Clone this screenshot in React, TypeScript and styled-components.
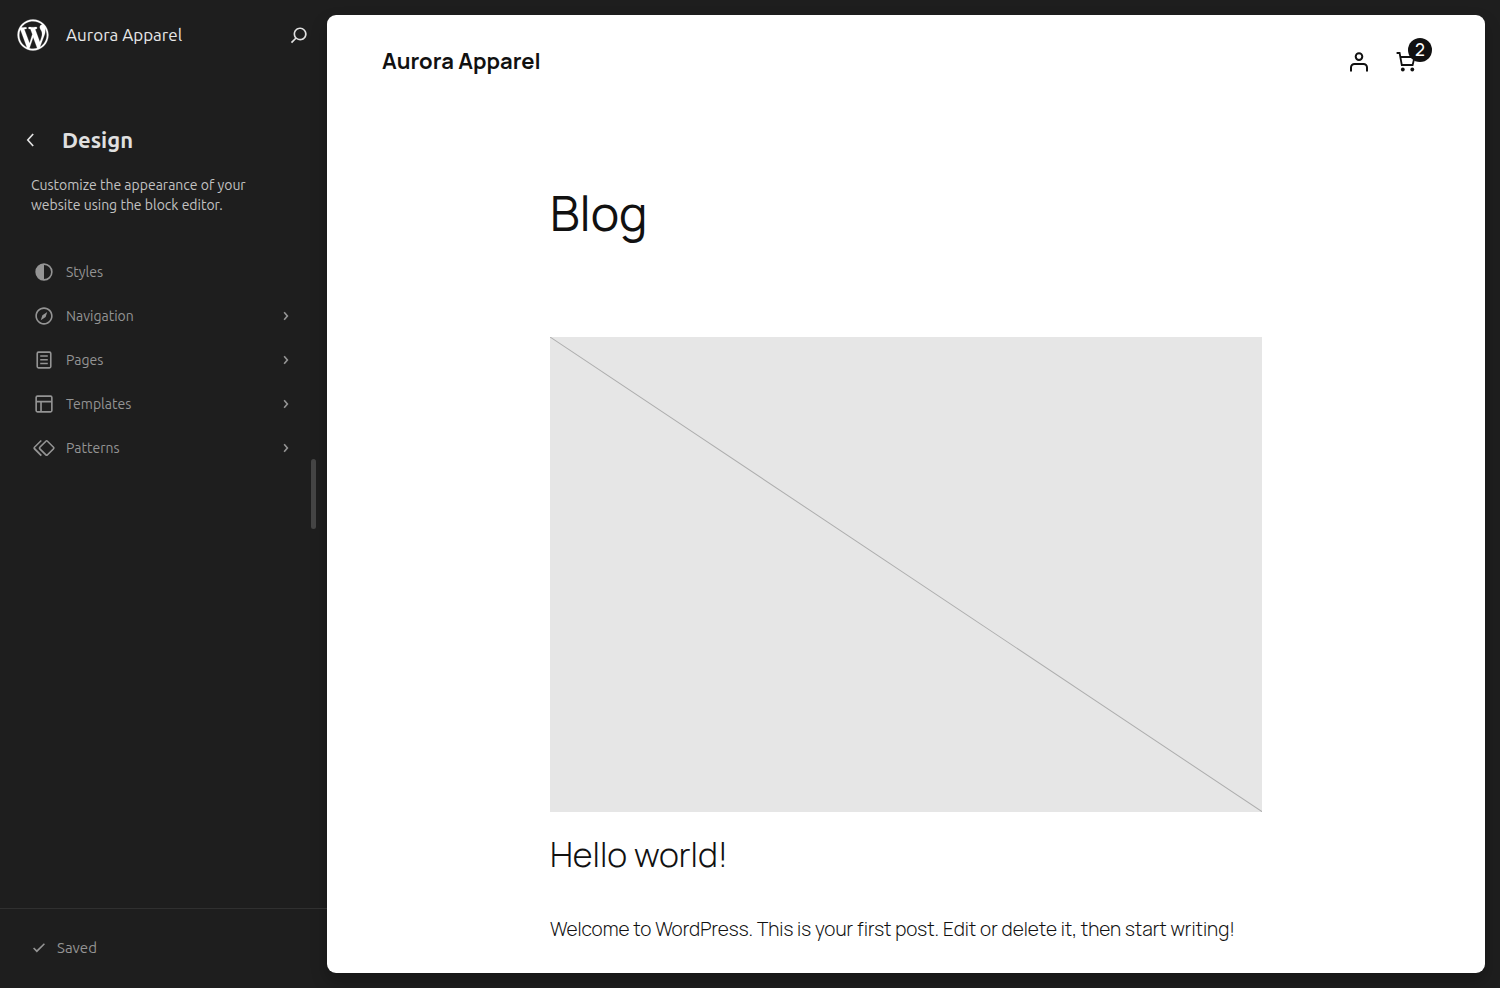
import React from "react";
import styled, { createGlobalStyle } from "styled-components";

const uiFont = `"Ubuntu", "Noto Sans", "Open Sans", sans-serif`;
const siteFont = `"Manrope", Inter, "Liberation Sans", sans-serif`;

const GlobalStyle = createGlobalStyle`
  *, *::before, *::after { box-sizing: border-box; }
  body { margin: 0; background: #1e1e1e; }
  h1, h2, p, ul { margin: 0; padding: 0; }
  button { font: inherit; border: 0; padding: 0; background: none; cursor: pointer; }
  a { text-decoration: none; color: inherit; }
`;

const Shell = styled.div`
  display: flex;
  min-height: 100vh;
  background: #1e1e1e;
`;

const Sidebar = styled.aside`
  position: relative;
  display: flex;
  flex-direction: column;
  flex: 0 0 327px;
  font-family: ${uiFont};
  color: #e0e0e0;
`;

const Hub = styled.header`
  display: flex;
  align-items: center;
  height: 70px;
  padding: 0 15px 0 16px;
  gap: 16px;
`;

const HubTitle = styled.a`
  flex: 1;
  font-size: 17px;
  line-height: 24px;
  color: #e8e8e8;
`;

const IconButton = styled.button`
  display: flex;
  align-items: center;
  justify-content: center;
  color: #e0e0e0;
`;

const LogoButton = styled(IconButton)`
  color: #fff;
`;

const Icon = styled.svg<{ $size?: number }>`
  display: block;
  flex: none;
  width: ${(p) => p.$size ?? 24}px;
  height: ${(p) => p.$size ?? 24}px;
  fill: currentColor;
`;

const Heading = styled.div`
  display: flex;
  align-items: center;
  gap: 18px;
  margin-top: 54px;
  padding: 0 18px;
`;

const PanelTitle = styled.h1`
  font-size: 22px;
  line-height: 32px;
  font-weight: 600;
`;

const Description = styled.p`
  margin-top: 19px;
  padding: 0 60px 0 31px;
  font-size: 14px;
  line-height: 20px;
  color: #c2c2c2;
`;

const NavList = styled.ul`
  margin-top: 35px;
  padding: 0 28px 0 31px;
  list-style: none;
`;

const NavLink = styled.a`
  display: flex;
  align-items: center;
  gap: 9px;
  height: 44px;
  font-size: 14px;
  line-height: 20px;
  color: #949494;
`;

const NavLabel = styled.span`
  flex: 1;
`;

const ResizeHandle = styled.button`
  position: absolute;
  top: 50%;
  right: 11px;
  width: 5px;
  height: 70px;
  margin-top: -35px;
  border-radius: 3px;
  background: #444;
`;

const SaveBar = styled.footer`
  display: flex;
  align-items: center;
  height: 80px;
  margin-top: auto;
  padding: 0 26px 2px;
  border-top: 1px solid #303030;
`;

const SavedButton = styled.button`
  display: flex;
  align-items: center;
  gap: 5px;
  font-size: 15px;
  line-height: 20px;
  color: #949494;
`;

const Canvas = styled.main`
  flex: 1;
  min-width: 0;
  margin: 15px 15px 15px 0;
  border-radius: 9px;
  background: #fff;
  box-shadow: 0 8px 16px rgba(0, 0, 0, 0.25);
  font-family: ${siteFont};
  color: #111;
`;

const SiteHeader = styled.div`
  display: flex;
  align-items: center;
  justify-content: space-between;
  height: 92px;
  padding: 0 66px 0 55px;
`;

const SiteTitle = styled.a`
  font-size: 22px;
  line-height: 32px;
  font-weight: 700;
`;

const SiteActions = styled.div`
  display: flex;
  align-items: center;
  gap: 24px;
`;

const SiteAction = styled.button`
  position: relative;
  display: block;
  color: #111;
`;

const Badge = styled.span`
  position: absolute;
  top: -11px;
  right: -13px;
  width: 24px;
  height: 24px;
  border-radius: 50%;
  background: #111;
  color: #fff;
  font-size: 17px;
  font-weight: 500;
  line-height: 24px;
  text-align: center;
`;

const Article = styled.article`
  max-width: 712px;
  margin: 0 auto;
  padding: 72px 0 28px;
`;

const PageTitle = styled.h1`
  font-size: 48px;
  line-height: 68px;
  font-weight: 400;
`;

const FeaturedImage = styled.svg`
  display: block;
  width: 100%;
  aspect-ratio: 3 / 2;
  margin-top: 90px;
  background: #e6e6e6;
`;

const PostTitle = styled.h2`
  margin-top: 19px;
  font-size: 34px;
  line-height: 46px;
  font-weight: 300;
`;

const PostText = styled.p`
  margin-top: 36px;
  font-size: 19px;
  line-height: 32px;
  font-weight: 300;
`;

const paths = {
  search:
    "M13 5c-3.3 0-6 2.7-6 6 0 1.4.5 2.7 1.3 3.7l-3.8 3.8 1.1 1.1 3.8-3.8c1 .8 2.3 1.3 3.7 1.3 3.3 0 6-2.7 6-6S16.3 5 13 5zm0 10.5c-2.5 0-4.5-2-4.5-4.5s2-4.5 4.5-4.5 4.5 2 4.5 4.5-2 4.5-4.5 4.5z",
  back: "M14.6 7l-1.2-1L8 12l5.4 6 1.2-1-4.6-5z",
  forward:
    "M10.86 8.04L14.28 12.03L10.86 16.02L9.72 15.04L12.3 12.03L9.72 9.02Z",
  styles:
    "M20 12a8 8 0 1 1-16 0 8 8 0 0 1 16 0Zm-1.5 0a6.5 6.5 0 0 1-6.5 6.5v-13a6.5 6.5 0 0 1 6.5 6.5Z",
  navigation:
    "M12 4c-4.4 0-8 3.6-8 8s3.6 8 8 8 8-3.6 8-8-3.6-8-8-8zm0 14.5c-3.6 0-6.5-2.9-6.5-6.5S8.4 5.5 12 5.5s6.5 2.9 6.5 6.5-2.9 6.5-6.5 6.5zM9 16l4.5-3L15 8.4l-4.5 3L9 16z",
  pages:
    "M15.5 7.5h-7V9h7V7.5Zm-7 3.5h7v1.5h-7V11Zm7 3.5h-7V16h7v-1.5ZM17 4H7a2 2 0 0 0-2 2v12a2 2 0 0 0 2 2h10a2 2 0 0 0 2-2V6a2 2 0 0 0-2-2ZM7 5.5h10a.5.5 0 0 1 .5.5v12a.5.5 0 0 1-.5.5H7a.5.5 0 0 1-.5-.5V6a.5.5 0 0 1 .5-.5Z",
  templates:
    "M18 5.5H6a.5.5 0 00-.5.5v3h13V6a.5.5 0 00-.5-.5zm.5 5H10v8h8a.5.5 0 00.5-.5v-7.5zm-10 0h-3V18a.5.5 0 00.5.5h2.5v-8zM6 4h12a2 2 0 012 2v12a2 2 0 01-2 2H6a2 2 0 01-2-2V6a2 2 0 012-2z",
  patterns:
    "M21.3 10.8l-5.6-5.6c-.7-.7-1.8-.7-2.5 0l-5.6 5.6c-.7.7-.7 1.8 0 2.5l5.6 5.6c.3.3.8.5 1.2.5s.9-.2 1.2-.5l5.6-5.6c.8-.7.8-1.9.1-2.5zm-1 1.4l-5.6 5.6c-.1.1-.3.1-.4 0l-5.6-5.6c-.1-.1-.1-.3 0-.4l5.6-5.6s.1-.1.2-.1.1 0 .2.1l5.6 5.6c.1.1.1.3 0 .4zm-16.6-.4L10 5.5l-1-1-6.3 6.3c-.7.7-.7 1.8 0 2.5L9 19.5l1.1-1.1-6.3-6.3c-.2 0-.2-.2-.1-.3z",
  check: "M16.5 7.5 10 13.9l-2.5-2.4-1 1 3.5 3.6 7.5-7.6z",
  wordpress:
    "M20 10c0-5.51-4.49-10-10-10C4.48 0 0 4.49 0 10c0 5.52 4.48 10 10 10 5.51 0 10-4.48 10-10zM7.78 15.37L4.37 6.22c.55-.02 1.17-.08 1.17-.08.5-.06.44-1.13-.06-1.11 0 0-1.45.11-2.37.11-.18 0-.37 0-.58-.01C4.12 2.69 6.87 1.11 10 1.11c2.33 0 4.45.87 6.05 2.34-.68-.11-1.65.39-1.65 1.58 0 .74.45 1.36.9 2.1.35.61.55 1.36.55 2.46 0 1.49-1.4 5-1.4 5l-3.03-8.37c.54-.02.82-.17.82-.17.5-.05.44-1.25-.06-1.22 0 0-1.44.12-2.38.12-.87 0-2.33-.12-2.33-.12-.5-.03-.56 1.2-.06 1.22l.92.08 1.26 3.41zM17.41 10c.24-.64.74-1.87.43-4.25.7 1.29 1.05 2.71 1.05 4.25 0 3.29-1.73 6.24-4.4 7.78.97-2.59 1.94-5.2 2.92-7.78zM6.1 18.09C3.12 16.65 1.11 13.53 1.11 10c0-1.3.23-2.48.72-3.59C3.25 10.3 4.67 14.2 6.1 18.09zm4.03-6.63l2.58 6.98c-.86.29-1.76.45-2.71.45-.79 0-1.57-.11-2.29-.33.81-2.38 1.62-4.74 2.42-7.1z",
};

/* The thin outline gives the mark a little more weight on the dark sidebar. */
const WordPressMark = () => (
  <Icon $size={34} viewBox="-1 -1 22 22" aria-hidden="true">
    <path d={paths.wordpress} stroke="currentColor" strokeWidth="0.15" />
  </Icon>
);

type GlyphProps = { name: keyof typeof paths; size?: number };

const Glyph = ({ name, size }: GlyphProps) => (
  <Icon $size={size} viewBox="0 0 24 24" aria-hidden="true">
    <path fillRule="evenodd" d={paths[name]} />
  </Icon>
);

const navItems: { label: string; icon: keyof typeof paths; nested: boolean }[] = [
  { label: "Styles", icon: "styles", nested: false },
  { label: "Navigation", icon: "navigation", nested: true },
  { label: "Pages", icon: "pages", nested: true },
  { label: "Templates", icon: "templates", nested: true },
  { label: "Patterns", icon: "patterns", nested: true },
];

export default function App() {
  return (
    <>
      <GlobalStyle />
      <Shell>
        <Sidebar>
          <Hub>
            <LogoButton aria-label="Dashboard">
              <WordPressMark />
            </LogoButton>
            <HubTitle href="#site">Aurora Apparel</HubTitle>
            <IconButton aria-label="Search">
              <Glyph name="search" size={26} />
            </IconButton>
          </Hub>
          <Heading>
            <IconButton aria-label="Back">
              <Glyph name="back" size={26} />
            </IconButton>
            <PanelTitle>Design</PanelTitle>
          </Heading>
          <Description>
            Customize the appearance of your website using the block editor.
          </Description>
          <nav aria-label="Design">
            <NavList>
              {navItems.map((item) => (
                <li key={item.label}>
                  <NavLink href={`#${item.icon}`}>
                    <Glyph name={item.icon} size={26} />
                    <NavLabel>{item.label}</NavLabel>
                    {item.nested && <Glyph name="forward" size={26} />}
                  </NavLink>
                </li>
              ))}
            </NavList>
          </nav>
          <SaveBar>
            <SavedButton>
              <Glyph name="check" size={26} />
              Saved
            </SavedButton>
          </SaveBar>
          <ResizeHandle aria-label="Resize sidebar" />
        </Sidebar>
        <Canvas>
          <SiteHeader>
            <SiteTitle href="#home">Aurora Apparel</SiteTitle>
            <SiteActions>
              <SiteAction aria-label="Account">
                <Icon viewBox="0 0 24 24" aria-hidden="true">
                  <g fill="none" stroke="currentColor" strokeWidth="2">
                    <circle cx="12" cy="7.6" r="3.3" />
                    <path d="M4 22.6v-4.2a3.5 3.5 0 0 1 3.5-3.5h9a3.5 3.5 0 0 1 3.5 3.5V22.6" />
                  </g>
                </Icon>
              </SiteAction>
              <SiteAction aria-label="Cart, 2 items">
                <Icon viewBox="0 0 24 24" aria-hidden="true">
                  <path
                    d="M1.6 4h3l2.2 12h10.8l2-8H5.4"
                    fill="none"
                    stroke="currentColor"
                    strokeWidth="1.8"
                  />
                  <circle cx="7.8" cy="20.5" r="1.9" />
                  <circle cx="17.3" cy="20.5" r="1.9" />
                </Icon>
                <Badge>2</Badge>
              </SiteAction>
            </SiteActions>
          </SiteHeader>
          <Article>
            <PageTitle>Blog</PageTitle>
            <FeaturedImage viewBox="0 0 712 474" preserveAspectRatio="none" aria-hidden="true">
              <line x1="0" y1="0" x2="712" y2="474" stroke="#adadad" />
            </FeaturedImage>
            <PostTitle>Hello world!</PostTitle>
            <PostText>
              Welcome to WordPress. This is your first post. Edit or delete it, then start writing!
            </PostText>
          </Article>
        </Canvas>
      </Shell>
    </>
  );
}
